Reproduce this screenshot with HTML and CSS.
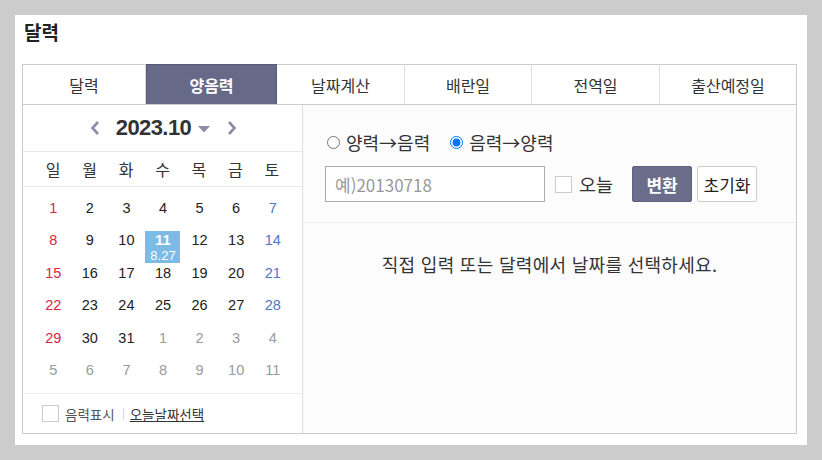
FILE: index.html
```html
<!DOCTYPE html>
<html lang="ko">
<head>
<meta charset="utf-8">
<link rel="stylesheet" href="styles.css">
</head>
<body>
<div class="page">
  <h1 class="title">달력</h1>
  <div class="box">
    <div class="tabs">
      <div class="tab t1">달력</div>
      <div class="tab t2 active">양음력</div>
      <div class="tab t3">날짜계산</div>
      <div class="tab t4">배란일</div>
      <div class="tab t5">전역일</div>
      <div class="tab t6 last">출산예정일</div>
    </div>
    <div class="body">
      <div class="cal">
        <div class="cal-head">
          <svg class="arrow" width="10" height="16" viewBox="0 0 10 16"><path d="M8 2 L2.5 8 L8 14" fill="none" stroke="#8a8ea6" stroke-width="2.6"/></svg>
          <span class="ym">2023.10</span>
          <svg class="caret" width="12" height="7" viewBox="0 0 12 7"><path d="M0 0 H12 L6 6.5 Z" fill="#8a8ea6"/></svg>
          <svg class="arrow next" width="10" height="16" viewBox="0 0 10 16"><path d="M2 2 L7.5 8 L2 14" fill="none" stroke="#8a8ea6" stroke-width="2.6"/></svg>
        </div>
        <div class="week">
          <span>일</span><span>월</span><span>화</span><span>수</span><span>목</span><span>금</span><span>토</span>
        </div>
        <div class="days">
          <div class="d sun">1</div><div class="d">2</div><div class="d">3</div><div class="d">4</div><div class="d">5</div><div class="d">6</div><div class="d sat">7</div>
          <div class="d sun">8</div><div class="d">9</div><div class="d">10</div><div class="d"><div class="sel"><b>11</b><small>8.27</small></div></div><div class="d">12</div><div class="d">13</div><div class="d sat">14</div>
          <div class="d sun">15</div><div class="d">16</div><div class="d">17</div><div class="d">18</div><div class="d">19</div><div class="d">20</div><div class="d sat">21</div>
          <div class="d sun">22</div><div class="d">23</div><div class="d">24</div><div class="d">25</div><div class="d">26</div><div class="d">27</div><div class="d sat">28</div>
          <div class="d sun">29</div><div class="d">30</div><div class="d">31</div><div class="d off">1</div><div class="d off">2</div><div class="d off">3</div><div class="d off">4</div>
          <div class="d off">5</div><div class="d off">6</div><div class="d off">7</div><div class="d off">8</div><div class="d off">9</div><div class="d off">10</div><div class="d off">11</div>
        </div>
        <div class="cal-foot">
          <span class="chk"></span>
          <span class="lbl">음력표시</span>
          <span class="sep"></span>
          <span class="today">오늘날짜선택</span>
        </div>
      </div>
      <div class="conv">
        <div class="form">
          <div class="radios">
            <label class="radio"><input type="radio" name="m">양력→음력</label>
            <label class="radio"><input type="radio" name="m" checked>음력→양력</label>
          </div>
          <div class="inputs">
            <input class="date" type="text" placeholder="예)20130718">
            <span class="chk big"></span>
            <span class="today-lbl">오늘</span>
            <button class="btn primary">변환</button>
            <button class="btn">초기화</button>
          </div>
        </div>
        <div class="msg">직접 입력 또는 달력에서 날짜를 선택하세요.</div>
      </div>
    </div>
  </div>
</div>
</body>
</html>
```
FILE: styles.css
```css
* { box-sizing: border-box; }
html, body { margin: 0; padding: 0; }
body {
  background: #cccccc;
  font-family: "Noto Sans CJK KR", "Liberation Sans", sans-serif;
  color: #333;
  width: 822px;
  height: 460px;
  overflow: hidden;
}
.page {
  margin: 15px 0 0 15px;
  width: 792px;
  height: 430px;
  background: #fff;
  padding: 4px 10px 0 7px;
}
.title {
  margin: 0 0 19px 2px;
  font-size: 19px;
  line-height: 26px;
  font-weight: 700;
  color: #222;
}
.box {
  border: 1px solid #cccccc;
  height: 370px;
  display: flex;
  flex-direction: column;
}
.tabs {
  display: flex;
  height: 40px;
  border-bottom: 1px solid #cccccc;
}
.tab {
  display: flex;
  align-items: center;
  justify-content: center;
  font-size: 16px;
  color: #333;
  border-right: 1px solid #dddddd;
  margin-top: -1px;
  border-top: 1px solid transparent;
}
.t1 { width: 123px; }
.t2 { width: 131px; }
.t3 { width: 128px; }
.t4 { width: 127px; }
.t5 { width: 128px; }
.t6 { flex: 1; }
.tab.last { border-right: none; }
.tab.active {
  background: #666a88;
  color: #fff;
  font-weight: 700;
  border: 1px solid #565a78;
  border-bottom: none;
}
.body {
  flex: 1;
  display: flex;
}
.cal {
  width: 280px;
  border-right: 1px solid #dddddd;
  display: flex;
  flex-direction: column;
}
.cal-head {
  height: 47px;
  border-bottom: 1px solid #e8e8e8;
  display: flex;
  align-items: center;
  justify-content: center;
  padding-left: 2px;
}
.arrow { margin-right: 16px; }
.arrow.next { margin-left: 17px; margin-right: 0; }
.ym {
  font-family: "Liberation Sans", sans-serif;
  font-weight: 700;
  font-size: 22px;
  letter-spacing: -0.6px;
  color: #333;
  line-height: 26px;
}
.caret { margin-left: 7px; margin-top: 2px; }
.week {
  height: 35px;
  border-bottom: 1px solid #e8e8e8;
  display: grid;
  grid-template-columns: repeat(7, 1fr);
  padding: 0 12px;
  align-items: center;
  font-size: 16px;
  text-align: center;
  color: #333;
}
.days {
  display: grid;
  grid-template-columns: repeat(7, 1fr);
  grid-auto-rows: 32.4px;
  padding: 5px 11px 0 12px;
  height: 207px;
  border-bottom: 1px solid #eeeeee;
}
.d {
  font-family: "Liberation Sans", sans-serif;
  font-size: 14.5px;
  line-height: 18px;
  text-align: center;
  padding-top: 7px;
  color: #222;
  display: flex;
  justify-content: center;
}
.d.sun { color: #d9253f; }
.d.sat { color: #4a78c9; }
.d.off { color: #9b9b9b; }
.sel {
  width: 35px;
  height: 32px;
  background: #7bbbe6;
  color: #fff;
  display: flex;
  flex-direction: column;
  align-items: center;
  position: relative;
  z-index: 1;
}
.sel b { font-size: 15px; line-height: 18px; font-weight: 700; }
.sel small { font-size: 13px; line-height: 13px; }
.cal-foot {
  flex: 1;
  display: flex;
  align-items: center;
  padding-left: 19px;
  font-size: 13.5px;
}
.chk {
  width: 17px;
  height: 17px;
  border: 1px solid #cccccc;
  background: #fff;
  display: inline-block;
}
.lbl { margin-left: 6px; color: #555; }
.sep {
  width: 1px;
  height: 12px;
  background: #e8cfd6;
  margin: 0 6px 0 8px;
}
.today { text-decoration: underline; color: #333; }
.conv {
  flex: 1;
  background: #fcfcfc;
  display: flex;
  flex-direction: column;
}
.form {
  height: 118px;
  border-bottom: 1px solid #eeeeee;
  padding: 25px 0 0 22px;
}
.radios {
  display: flex;
  align-items: center;
  height: 24px;
  font-size: 18px;
  color: #333;
}
.radio {
  display: flex;
  align-items: center;
  margin-right: 18px;
}
.radio input {
  margin: 0 6px 0 2px;
  width: 13px;
  height: 13px;
}
.inputs {
  display: flex;
  align-items: center;
  margin-top: 12px;
  height: 36px;
}
.date {
  width: 220px;
  height: 36px;
  border: 1px solid #aaaaaa;
  background: #fff;
  padding: 0 9px;
  font-size: 17px;
  font-family: "Noto Sans CJK KR", "Liberation Sans", sans-serif;
  outline: none;
}
.date::placeholder { color: #999; }
.chk.big { margin-left: 10px; }
.today-lbl {
  font-size: 18.5px;
  color: #333;
  margin-left: 7px;
}
.btn {
  width: 60px;
  height: 36px;
  border: 1px solid #cccccc;
  background: #fff;
  border-radius: 2px;
  font-family: "Noto Sans CJK KR", sans-serif;
  font-size: 17px;
  color: #222;
  padding: 0;
  margin-left: 5px;
}
.btn.primary {
  margin-left: 19px;
  background: #6b6e8a;
  border-color: #5e6280;
  color: #fff;
  font-weight: 700;
}
.msg {
  text-align: center;
  font-size: 18px;
  letter-spacing: 0.3px;
  line-height: 22px;
  color: #333;
  padding-top: 30px;
}
```
